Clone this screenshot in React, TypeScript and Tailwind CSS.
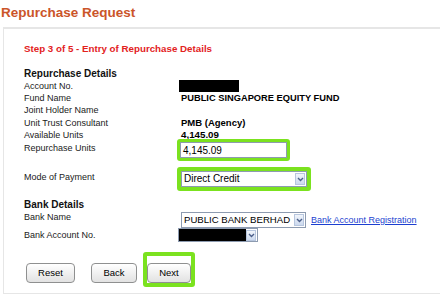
import type { ReactNode } from "react";

function Arrow() {
  return (
    <span className="mr-px flex h-[12px] w-[10px] shrink-0 items-center justify-center border border-[#b7c6de] bg-linear-to-b from-[#f1f5fb] to-[#ccd9ee]">
      <svg width="7" height="5" viewBox="0 0 7 5">
        <path d="M1 1l2.5 2.5L6 1" fill="none" stroke="#4b5f8a" strokeWidth="1.4" />
      </svg>
    </span>
  );
}

function Select({ width, text = "text-[10px]", children }: { width: string; text?: string; children: ReactNode }) {
  return (
    <div className={`flex h-[16px] shrink-0 items-center border border-[#8d9bb0] bg-white ${width}`}>
      <span className={`flex-1 whitespace-nowrap pl-[2px] leading-[14px] text-black ${text}`}>{children}</span>
      <Arrow />
    </div>
  );
}

function Label({ children, className = "" }: { children: ReactNode; className?: string }) {
  return <div className={`text-[9px] leading-[12.2px] text-[#1a1a1a] ${className}`}>{children}</div>;
}

function Btn({ label, width }: { label: string; width: string }) {
  return (
    <button
      className={`h-[20px] rounded-[4px] border border-[#8f9090] bg-linear-to-b from-white to-[#e2e2e2] text-[9.5px] text-black ${width}`}
    >
      {label}
    </button>
  );
}

export default function App() {
  return (
    <div className="h-[304px] w-[440px] overflow-hidden bg-white font-['Liberation_Sans',Arial,sans-serif]">
      <h1 className="pl-[1px] pt-[5px] text-[13.5px] font-bold leading-[16px] text-[#cb5529]">
        Repurchase Request
      </h1>

      <div className="ml-[3px] mt-[6px] h-[267px] w-[460px] border-l border-b border-t-2 border-[#e6e6e6] pl-[20px]">
        <p className="pt-[13.5px] text-[9.75px] font-bold leading-[12px] text-[#e3221d]">
          Step 3 of 5 - Entry of Repurchase Details
        </p>

        <div className="mt-[12.5px] grid grid-cols-[155px_1fr] items-start">
          <div className="col-span-2 text-[10px] font-bold leading-[13px] text-[#111]">Repurchase Details</div>

          <Label>Account No.</Label>
          <div className="h-[12px] w-[60px] bg-black" />

          <Label>Fund Name</Label>
          <div className="whitespace-nowrap pl-[2px] text-[9.3px] font-bold leading-[12.2px] text-black">
            PUBLIC SINGAPORE EQUITY FUND
          </div>

          <Label>Joint Holder Name</Label>
          <div className="h-[12.2px]" />

          <Label>Unit Trust Consultant</Label>
          <div className="pl-[2px] text-[9.5px] font-bold leading-[12.2px] text-black">PMB (Agency)</div>

          <Label>Available Units</Label>
          <div className="pl-[2px] text-[9.75px] font-bold leading-[12.2px] text-black">4,145.09</div>

          <Label className="pt-[0.5px]">Repurchase Units</Label>
          <div className="-ml-[2px] -mt-[2px] w-fit rounded-[3px] border-[3px] border-[#7be21f]">
            <div className="flex h-[16px] w-[107px] items-center border border-[#8d9bb0] bg-white pl-[2px] text-[10px] text-black">
              4,145.09
            </div>
          </div>

          <Label className="mt-[6px] pt-[4px]">Mode of Payment</Label>
          <div className="-ml-[2px] mt-[6px] w-fit rounded-[3px] border-4 border-[#7be21f]">
            <Select width="w-[126px]">Direct Credit</Select>
          </div>

          <div className="col-span-2 mt-[6.5px] text-[10px] font-bold leading-[13px] text-[#111]">Bank Details</div>

          <Label className="pt-[0.5px]">Bank Name</Label>
          <div className="ml-[2px] mt-[1.5px] flex items-center gap-[5px]">
            <Select width="w-[125px]" text="text-[9.6px]">PUBLIC BANK BERHAD</Select>
            <a href="#" className="whitespace-nowrap text-[9px] leading-[12px] text-[#1c3fd0] underline">
              Bank Account Registration
            </a>
          </div>

          <Label className="pt-[0.5px]">Bank Account No.</Label>
          <div className="-ml-px flex h-[14px] w-[80px] items-center border border-[#8d9bb0] bg-white">
            <span className="h-full w-[67px] bg-black" />
            <span className="ml-auto mr-px flex h-[11px] w-[10px] items-center justify-center border border-[#b7c6de] bg-linear-to-b from-[#f1f5fb] to-[#ccd9ee]">
              <svg width="7" height="5" viewBox="0 0 7 5">
                <path d="M1 1l2.5 2.5L6 1" fill="none" stroke="#4b5f8a" strokeWidth="1.4" />
              </svg>
            </span>
          </div>
        </div>

        <div className="mt-[10px] flex items-start">
          <div className="ml-[2px] mt-[7px]">
            <Btn label="Reset" width="w-[49px]" />
          </div>
          <div className="ml-[16px] mt-[7px]">
            <Btn label="Back" width="w-[46px]" />
          </div>
          <div className="ml-[6px] rounded-[3px] border-4 border-[#7be21f] pt-[3px]">
            <Btn label="Next" width="w-[44px]" />
          </div>
        </div>
      </div>
    </div>
  );
}
